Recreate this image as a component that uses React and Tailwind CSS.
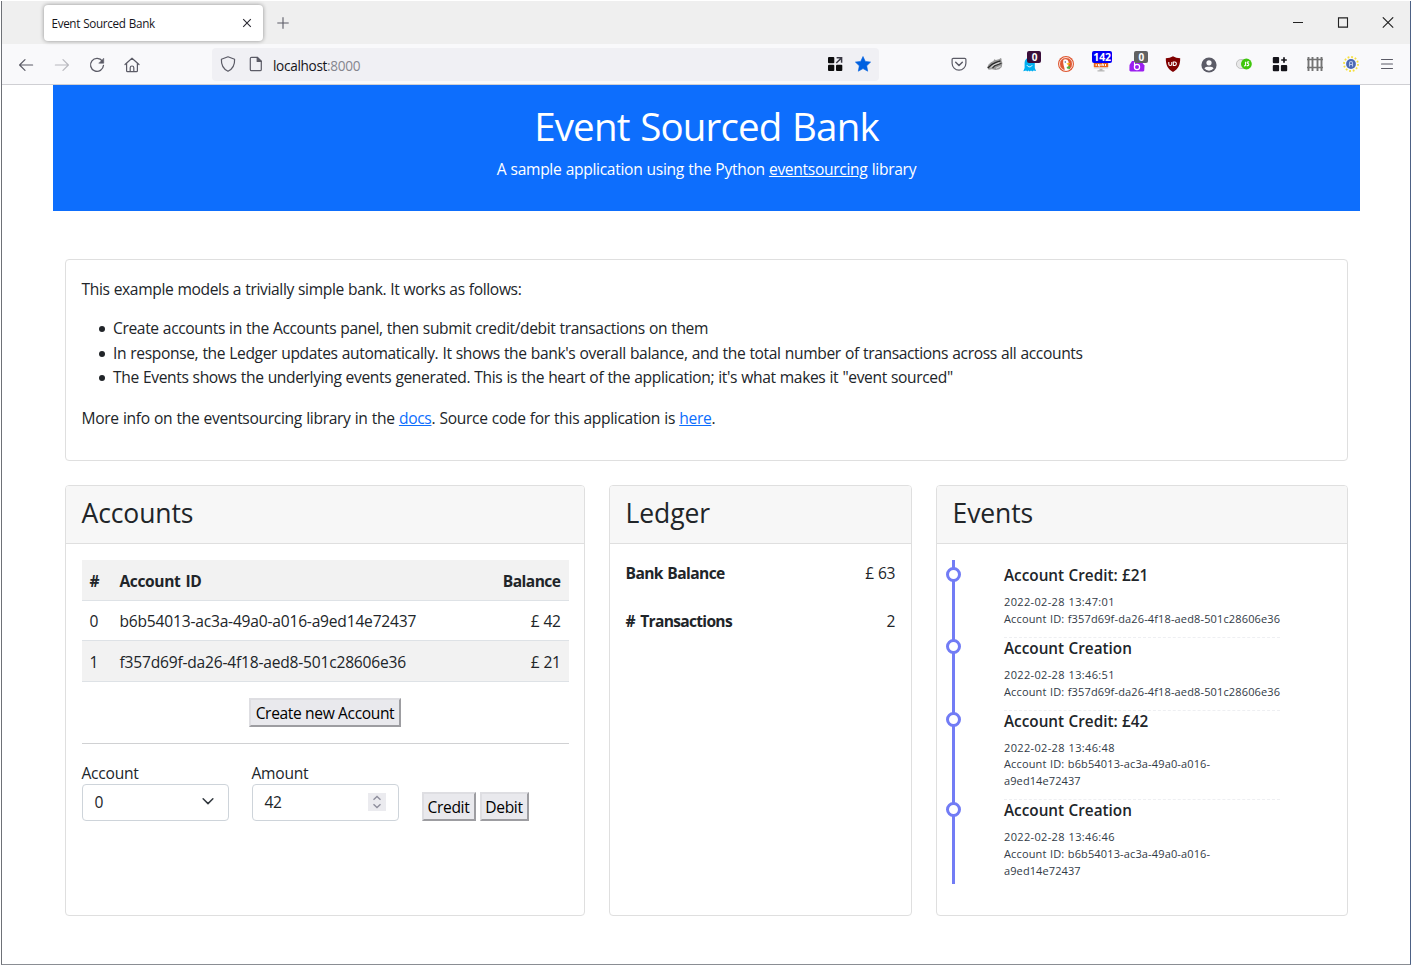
import React from "react";

function NavIcon({ children, className = "" }) {
  return (
    <svg viewBox="0 0 16 16" className={"size-4 shrink-0 " + className} fill="none" stroke="#5b5b66" strokeWidth="1.2" strokeLinecap="round" strokeLinejoin="round">
      {children}
    </svg>
  );
}

function Slot({ children }) {
  return <div className="relative flex h-10 w-[35.6px] shrink-0 items-center justify-center">{children}</div>;
}

function TabStrip() {
  return (
    <div className="flex h-[43px] items-center bg-[#efefef] pl-[41.500px]">
      <div className="flex h-[36px] w-[219px] items-center justify-between rounded bg-white pl-[8px] pr-[11px] shadow-[0_0_4px_rgba(0,0,0,0.4)]">
        <span className="text-[11.7px] leading-4 tracking-[-0.35px] [word-spacing:0.6px] text-[#15141a]">Event Sourced Bank</span>
        <svg viewBox="0 0 10 10" className="size-[10px]" stroke="#2b2a33" strokeWidth="1.1">
          <path d="M1.2 1.2 8.8 8.8M8.8 1.2 1.2 8.8" />
        </svg>
      </div>
      <svg viewBox="0 0 12 12" className="ml-[14.500px] size-3" stroke="#5b5b66" strokeWidth="1.1">
        <path d="M6 .3v11.400M.3 6h11.400" />
      </svg>
      <div className="ml-auto flex items-center pr-[16px]">
        <svg viewBox="0 0 12 12" className="size-3" stroke="#222" strokeWidth="1" fill="none">
          <path d="M1 5.500h10" />
        </svg>
        <svg viewBox="0 0 12 12" className="ml-[33px] size-3" stroke="#222" strokeWidth="1.1" fill="none">
          <path d="M1.500 .9h9v9.200h-9z" />
        </svg>
        <svg viewBox="0 0 12 12" className="ml-[33px] size-3" stroke="#222" strokeWidth="1.1" fill="none">
          <path d="M.8 .3 11.200 10.700M11.200 .3.8 10.700" />
        </svg>
      </div>
    </div>
  );
}

function AddressBar() {
  return (
    <div className="flex h-[33px] w-[667px] items-center rounded bg-[#f0f0f4] pl-2 pr-[8px]">
      <NavIcon>
        <path d="M8 .8 14.6 3.3c.3 5.600-1.600 9.600-6.600 12C3 12.900 1.100 8.900 1.400 3.300Z" />
      </NavIcon>
      <NavIcon className="ml-3">
        <path d="M3.600 1.300h5.800l3.900 3.900v8.200a1.300 1.300 0 0 1-1.300 1.300H3.600a1.300 1.300 0 0 1-1.300-1.300V2.600a1.300 1.300 0 0 1 1.300-1.300Z" />
        <path d="M9.200 1.300v4.100h4.100Z" fill="#5b5b66" />
      </NavIcon>
      <span className="ml-[9px] mt-[3px] text-[13.600px] leading-5 tracking-[-0.32px] text-[#15141a]">
        localhost<span className="text-[#86868e]">:8000</span>
      </span>
      <svg viewBox="0 0 16 16" className="ml-auto size-4" fill="#0c0c0d">
        <rect x="1" y="1" width="6.300" height="6.300" rx="1" />
        <rect x="1" y="8.800" width="6.300" height="6.300" rx="1" />
        <rect x="9" y="8.800" width="6.300" height="6.300" rx="1" />
        <path d="M9.600 1.800h5v5M14.300 2.100 9.300 7" fill="none" stroke="#3a3944" strokeWidth="1.500" />
      </svg>
      <svg viewBox="0 0 16 16" className="ml-3 size-4" fill="#0061e0">
        <path d="m8 .5 2.300 4.900 5.300.7-3.900 3.700 1 5.400L8 12.600l-4.700 2.600 1-5.400L.4 6.100l5.300-.7Z" stroke="#0061e0" strokeWidth=".6" strokeLinejoin="round" />
      </svg>
    </div>
  );
}

function Extensions() {
  return (
    <div className="ml-auto flex items-center pr-[6px]">
      <Slot>
        <NavIcon>
          <path d="M2.300 2.300h11.400a1.200 1.200 0 0 1 1.200 1.200v3.700a6.900 6.900 0 0 1-13.800 0V3.500a1.200 1.200 0 0 1 1.200-1.200Z" />
          <path d="m4.700 6.300 3.300 3.200 3.300-3.200" strokeWidth="1.500" />
        </NavIcon>
      </Slot>
      <Slot>
        <svg viewBox="0 0 16 16" className="size-4">
          <path d="M.2 11.600 1.500 8.500 4 6.300 6.500 5l.7-1.800 1.700.9L12.500 3l.9-1 1.200.8-.1 1.900.9 2.300-.6 4-2.500 2.300-3.800.6-3.500-.6-3.300.5Z" fill="#9a9a9a" />
          <path d="M.8 12 5 8.300l4-2 4.500-1.500" fill="none" stroke="#2a2a2a" strokeWidth="1.300" />
          <path d="m5.500 12 2.500-2.400 4-1.300 2.500-1" fill="none" stroke="#333" strokeWidth="1.200" />
          <path d="m3.500 11.700 3.500-2.900 5.500-2.300M9 12.300l4.500-2" fill="none" stroke="#ededed" strokeWidth=".8" />
        </svg>
      </Slot>
      <Slot>
        <svg viewBox="0 0 16 16" className="size-4">
          <path d="M1.300 15.200 2.600 12V6.500a5 5 0 0 1 10.200 0V12l1.300 3-2.500-.6-1.200 1.200-1.400-1.200-1.300 1.200-1.200-1.200-1.300 1.200-1-1.200Z" fill="#00aef0" />
          <path d="M5 9.300c1.300 2 3.900 2 5.200 0" fill="none" stroke="#fff" />
        </svg>
        <span className="absolute left-[15px] top-[7px] h-3 w-[14px] rounded-[2px] bg-[#3b0f3b] text-center text-[10px] font-bold leading-[12px] text-white">0</span>
      </Slot>
      <Slot>
        <svg viewBox="0 0 16 16" className="size-4">
          <circle cx="8" cy="8" r="8" fill="#de5833" />
          <circle cx="8" cy="8" r="6.500" fill="none" stroke="#fff" strokeWidth=".8" />
          <path d="M5.300 4c1-1.400 4.800-1.200 5.200 1.800.2 1.500-.2 2.500-.2 4l.6 4c-1.500.8-3 .8-4 .4C6.400 11 4.500 7.500 5.300 4Z" fill="#fff" />
          <path d="M8.400 7.600c1.400-.8 3-.8 4-.3L10.200 9.200Z" fill="#fdb90a" />
          <path d="m8.600 11 3.400-1.300v3.300L9 12.500Z" fill="#4fb041" />
          <circle cx="7.300" cy="6" r=".7" fill="#2d4f8e" />
        </svg>
      </Slot>
      <Slot>
        <svg viewBox="0 0 16 16" className="size-4">
          <rect x=".8" y="4" width="14.400" height="7.600" rx=".8" fill="#e8641b" />
          <path d="M3.200 8v2M5.500 8v2h1.500V8M9 10V8h1.300v2M12.500 8v2" stroke="#fff" fill="none" />
          <rect x=".8" y="11.400" width="14.400" height="1.300" fill="#dedede" />
          <path d="M6.500 12.700h3v1.500h2v1.200h-7v-1.200h2Z" fill="#b7b7b7" />
        </svg>
        <span className="absolute left-[8.500px] top-[7px] h-3 w-5 rounded-[2px] bg-[#0000f5] text-center text-[10.500px] font-bold leading-[12px] tracking-[-0.1px] text-white">142</span>
      </Slot>
      <Slot>
        <svg viewBox="0 0 16 16" className="size-4">
          <path d="M.5 9 3 5h9l3.500 4.500-.3 5.300-1 .7H1.500L.4 14.500Z" fill="#9b1ef0" />
          <circle cx="8" cy="11" r="2.600" fill="none" stroke="#fff" strokeWidth="1.200" />
          <path d="M5.500 11V5.500" stroke="#fff" strokeWidth="1.100" />
        </svg>
        <span className="absolute left-[15px] top-[7px] h-3 w-[14px] rounded-[2px] bg-[#616161] text-center text-[10px] font-bold leading-[12px] text-white">0</span>
      </Slot>
      <Slot>
        <svg viewBox="0 0 16 16" className="size-4">
          <path d="M8 .3c2 1.300 4.500 2 7.200 2C15.200 9 13.500 13 8 15.900 2.500 13 .8 9 .8 2.300 3.500 2.300 6 1.600 8 .3Z" fill="#800000" />
          <path d="M3.800 6v2a1.500 1.500 0 0 0 3 0V6" fill="none" stroke="#fff" strokeWidth="1.100" />
          <path d="M8.300 6h1.700a1.800 1.800 0 0 1 0 3.500H8.300Z" fill="none" stroke="#fff" strokeWidth="1.100" />
        </svg>
      </Slot>
      <Slot>
        <svg viewBox="0 0 16 16" className="ml-px mt-px size-4">
          <circle cx="8" cy="8" r="7.600" fill="#5b5b66" />
          <circle cx="8" cy="5.800" r="2.600" fill="#f9f9fb" />
          <path d="M3.400 11.600c.8-1.600 2-1.800 4.600-1.800s3.800.2 4.600 1.800A6 6 0 0 1 8 13.700a6 6 0 0 1-4.600-2.100Z" fill="#f9f9fb" />
        </svg>
      </Slot>
      <Slot>
        <svg viewBox="0 0 16 16" className="ml-px size-4">
          <rect x=".4" y="3.500" width="13" height="9" rx="4.500" fill="#e8e8e8" stroke="#b5b5b5" strokeWidth=".8" />
          <circle cx="10.400" cy="8" r="5.400" fill="#3fc60c" />
          <path d="M9.500 5.700v3.400q-.2 1-1.500.7M13.200 6q-2.200-.5-2 .8c.2.900 1.800.8 1.600 2-.2 1-1.500.9-2.200.6" fill="none" stroke="#fff" strokeWidth="1.100" />
        </svg>
      </Slot>
      <Slot>
        <svg viewBox="0 0 16 16" className="ml-px size-4" fill="#15141a">
          <rect x=".8" y="1" width="6.300" height="6.300" rx="1" />
          <rect x=".8" y="8.900" width="6.300" height="6.300" rx="1" />
          <rect x="8.900" y="8.900" width="6.300" height="6.300" rx="1" />
          <path d="M12 1.200v5.600M9.200 4h5.600" stroke="#15141a" strokeWidth="1.700" />
        </svg>
      </Slot>
      <Slot>
        <svg viewBox="0 0 16 16" className="size-4" fill="none" stroke="#737373">
          <path d="M1.500 1v14M5.500 1v14M10.500 1v14M14.500 1v14" strokeWidth="1.900" />
          <path d="M0 3.500h16M0 11.500h16" strokeWidth="1.300" />
        </svg>
      </Slot>
      <Slot>
        <svg viewBox="0 0 16 16" className="size-4">
          <circle cx="8" cy="8" r="7" fill="none" stroke="#f5df3c" strokeWidth="1.800" strokeDasharray="1.800 1.865" />
          <circle cx="8" cy="8" r="4.900" fill="#4a68b5" />
          <path d="M6.500 10.600V7a1.500 1.500 0 0 1 3 0v3.600M6.500 8.500h3" fill="none" stroke="#b9c7ea" strokeWidth="1.100" />
        </svg>
      </Slot>
      <Slot>
        <svg viewBox="0 0 16 16" className="ml-px size-4" fill="none" stroke="#5b5b66" strokeWidth="1.100" strokeLinecap="round">
          <path d="M2.500 3.500h11M2.500 8h11M2.500 12.500h11" />
        </svg>
      </Slot>
    </div>
  );
}

function Toolbar() {
  return (
    <div className="flex h-[41px] items-center border-b border-[#cfcfd3] bg-[#f9f9fb] pl-[15.500px]">
      <NavIcon className="mt-px">
        <path d="M14.600 8H1.600M7 2.600 1.600 8 7 13.400" />
      </NavIcon>
      <NavIcon className="ml-5 mt-px opacity-40">
        <path d="M1.400 8h13M9 2.600 14.400 8 9 13.400" />
      </NavIcon>
      <NavIcon className="ml-[19.500px] mt-px">
        <path d="M13.400 4.200A6.500 6.500 0 1 0 14.500 8.300" strokeWidth="1.300" />
        <path d="M14.700 1.600v4.600h-4.600Z" fill="#5b5b66" strokeWidth=".6" />
      </NavIcon>
      <NavIcon className="ml-[19px] mt-px">
        <path d="M1 7.500 8 1.200l7 6.300M2.600 6.500v7.200a1 1 0 0 0 1 1h8.800a1 1 0 0 0 1-1V6.500" />
        <path d="M6.200 14.500V10.800a1.800 1.800 0 0 1 3.600 0v3.700" />
      </NavIcon>
      <div className="ml-[72px]">
        <AddressBar />
      </div>
      <Extensions />
    </div>
  );
}

function Card({ title, className, children }) {
  return (
    <section className={"flex h-[431px] flex-col overflow-hidden rounded border border-[#dfdfdf] bg-white " + className}>
      <h2 className="h-[58px] shrink-0 border-b border-[#dfdfdf] bg-[#f7f7f7] pl-[15.500px] pt-2 text-[26.500px] leading-[38px] tracking-[-0.1px]">{title}</h2>
      {children}
    </section>
  );
}

function ClassicButton({ children, className }) {
  return (
    <button className={"h-[29px] whitespace-nowrap border-2 border-b-[#9d9da1] border-l-[#dedee2] border-r-[#9d9da1] border-t-[#dedee2] bg-[#e9e9ed] pt-0.5 text-center leading-[23px] text-black " + className}>
      {children}
    </button>
  );
}

const accounts = [
  { index: 0, id: "b6b54013-ac3a-49a0-a016-a9ed14e72437", balance: 42 },
  { index: 1, id: "f357d69f-da26-4f18-aed8-501c28606e36", balance: 21 },
];

function Accounts() {
  return (
    <Card title="Accounts" className="w-[520px]">
      <div className="px-[15.500px] pt-4">
        <table className="w-[487px] border-collapse">
          <thead>
            <tr className="h-[40px] border-b border-[#dee2e6] bg-[#f2f2f2]">
              <th className="w-[30px] pl-2 pt-0.5 text-left tracking-[-0.4px]">#</th>
              <th className="pl-2 pt-0.5 text-left tracking-[-0.4px] [word-spacing:1.5px]">Account ID</th>
              <th className="pr-2 pt-0.5 text-right tracking-[-0.55px]">Balance</th>
            </tr>
          </thead>
          <tbody>
            {accounts.map((a) => (
              <tr key={a.id} className="h-[40.500px] border-b border-[#dee2e6] even:bg-[#f2f2f2]">
                <td className="pl-2 pt-0.5">{a.index}</td>
                <td className="pl-2 pt-0.5 tracking-[-0.21px]">{a.id}</td>
                <td className="pr-2 pt-0.5 text-right">£ {a.balance}</td>
              </tr>
            ))}
          </tbody>
        </table>
        <div className="mt-[16px] flex justify-center">
          <ClassicButton className="w-[152px]">Create new Account</ClassicButton>
        </div>
        <hr className="mt-4 w-[487px] border-[#d0d1d3]" />
        <div className="mt-[17px] flex items-end">
          <div className="w-[147px]">
            <div className="pt-px leading-[22px] tracking-[-0.25px]">Account</div>
            <div className="flex h-[37px] items-center justify-between rounded border border-[#ced4da] pl-3 pr-[14px]">
              <span>0</span>
              <svg viewBox="0 0 16 16" className="mb-0.5 size-3" fill="none" stroke="#343a40" strokeWidth="2" strokeLinecap="round" strokeLinejoin="round">
                <path d="m1.500 5 6.500 6.500L14.500 5" />
              </svg>
            </div>
          </div>
          <div className="ml-[23px] w-[147px]">
            <div className="pt-px leading-[22px] tracking-[-0.25px]">Amount</div>
            <div className="flex h-[37px] items-center justify-between rounded border border-[#ced4da] pl-3 pr-3">
              <span>42</span>
              <span className="flex size-[18px] items-center justify-center bg-[#ebebef]">
                <svg viewBox="0 0 10 14" className="h-[14px] w-[10px]" fill="none" stroke="#8f8f9d" strokeWidth="1.400">
                  <path d="M1.500 4.800 5 1.500l3.500 3.300M1.500 9.200 5 12.500l3.500-3.300" />
                </svg>
              </span>
            </div>
          </div>
          <ClassicButton className="ml-[23px] w-[54px]">Credit</ClassicButton>
          <ClassicButton className="ml-1 w-[49px]">Debit</ClassicButton>
        </div>
      </div>
    </Card>
  );
}

function Ledger() {
  return (
    <Card title="Ledger" className="w-[303px]">
      <dl className="flex flex-col gap-[23.500px] pl-[15.500px] pr-4 pt-[17px]">
        <div className="flex justify-between leading-6">
          <dt className="font-bold tracking-[-0.6px] [word-spacing:1px]">Bank Balance</dt>
          <dd>£ 63</dd>
        </div>
        <div className="flex justify-between leading-6">
          <dt className="font-bold tracking-[-0.7px] [word-spacing:2px]"># Transactions</dt>
          <dd>2</dd>
        </div>
      </dl>
    </Card>
  );
}

const events = [
  { title: "Account Credit: £21", time: "2022-02-28 13:47:01", id: ["f357d69f-da26-4f18-aed8-501c28606e36"] },
  { title: "Account Creation", time: "2022-02-28 13:46:51", id: ["f357d69f-da26-4f18-aed8-501c28606e36"] },
  { title: "Account Credit: £42", time: "2022-02-28 13:46:48", id: ["b6b54013-ac3a-49a0-a016-", "a9ed14e72437"] },
  { title: "Account Creation", time: "2022-02-28 13:46:46", id: ["b6b54013-ac3a-49a0-a016-", "a9ed14e72437"] },
];

function Events() {
  return (
    <Card title="Events" className="w-[412px]">
      <ol className="ml-[15px] mt-4 h-[324px] w-[328px] border-l-[3px] border-[#727cf5] pl-[49px] pt-[5px]">
        {events.map((e) => (
          <li key={e.time} className="relative border-b border-dashed border-[#eeeff2] pb-[9.200px] last:border-0">
            <span className="absolute left-[-58px] top-[1.500px] size-[15px] rounded-full border-[3px] border-[#727cf5] bg-white" />
            <h3 className="text-[15.300px] font-semibold leading-[21px] tracking-[0px]">{e.title}</h3>
            <div className="mt-[8.200px] whitespace-nowrap text-[11px] leading-[16.700px] text-[#313a46]">
              <p className="tracking-[0.35px]">{e.time}</p>
              <p className="tracking-[0.14px]">Account ID: {e.id[0]}</p>
              {e.id[1] && <p className="tracking-[0.100px]">{e.id[1]}</p>}
            </div>
          </li>
        ))}
      </ol>
    </Card>
  );
}

export default function App() {
  return (
    <div className="h-[966px] w-[1412px] overflow-hidden bg-white pt-px font-['Open_Sans','Noto_Sans',sans-serif] text-[15.600px] leading-6 tracking-[-0.37px] [word-spacing:0.45px] text-[#212529]">
      <div className="mx-px h-[964px] w-[1410px] border-x border-b border-b-[#8a8d93] border-l-[#6e7177] border-r-[#4d6185]">
        <TabStrip />
        <Toolbar />
        <header className="ml-[51px] h-[126px] w-[1307px] bg-[#0d6efd] pt-[17px] text-center text-white">
          <h1 className="text-[38.500px] leading-[48px] tracking-[-0.85px] [word-spacing:1.500px]">Event Sourced Bank</h1>
          <p className="mt-[7px] tracking-[-0.31px]">
            A sample application using the Python <a className="underline">eventsourcing</a> library
          </p>
        </header>
        <main className="ml-[63px] w-[1283px]">
          <section className="mt-[48px] h-[202px] rounded border border-[#dfdfdf] px-[15.500px] pt-[17px]">
            <p>This example models a trivially simple bank. It works as follows:</p>
            <ul className="mt-[15px] list-none leading-[24.600px]">
              {[
                "Create accounts in the Accounts panel, then submit credit/debit transactions on them",
                "In response, the Ledger updates automatically. It shows the bank's overall balance, and the total number of transactions across all accounts",
                "The Events shows the underlying events generated. This is the heart of the application; it's what makes it \"event sourced\"",
              ].map((line) => (
                <li key={line} className="flex items-center pl-[17.500px]">
                  <span className="mr-[8px] mt-0.5 size-[6px] rounded-full bg-[#212529]" />
                  {line}
                </li>
              ))}
            </ul>
            <p className="mt-[16px] tracking-[-0.32px]">
              More info on the eventsourcing library in the <a className="text-[#0d6efd] underline">docs</a>. Source code for this application is{" "}
              <a className="text-[#0d6efd] underline">here</a>.
            </p>
          </section>
          <div className="mt-[24px] flex gap-6">
            <Accounts />
            <Ledger />
            <Events />
          </div>
        </main>
      </div>
    </div>
  );
}
